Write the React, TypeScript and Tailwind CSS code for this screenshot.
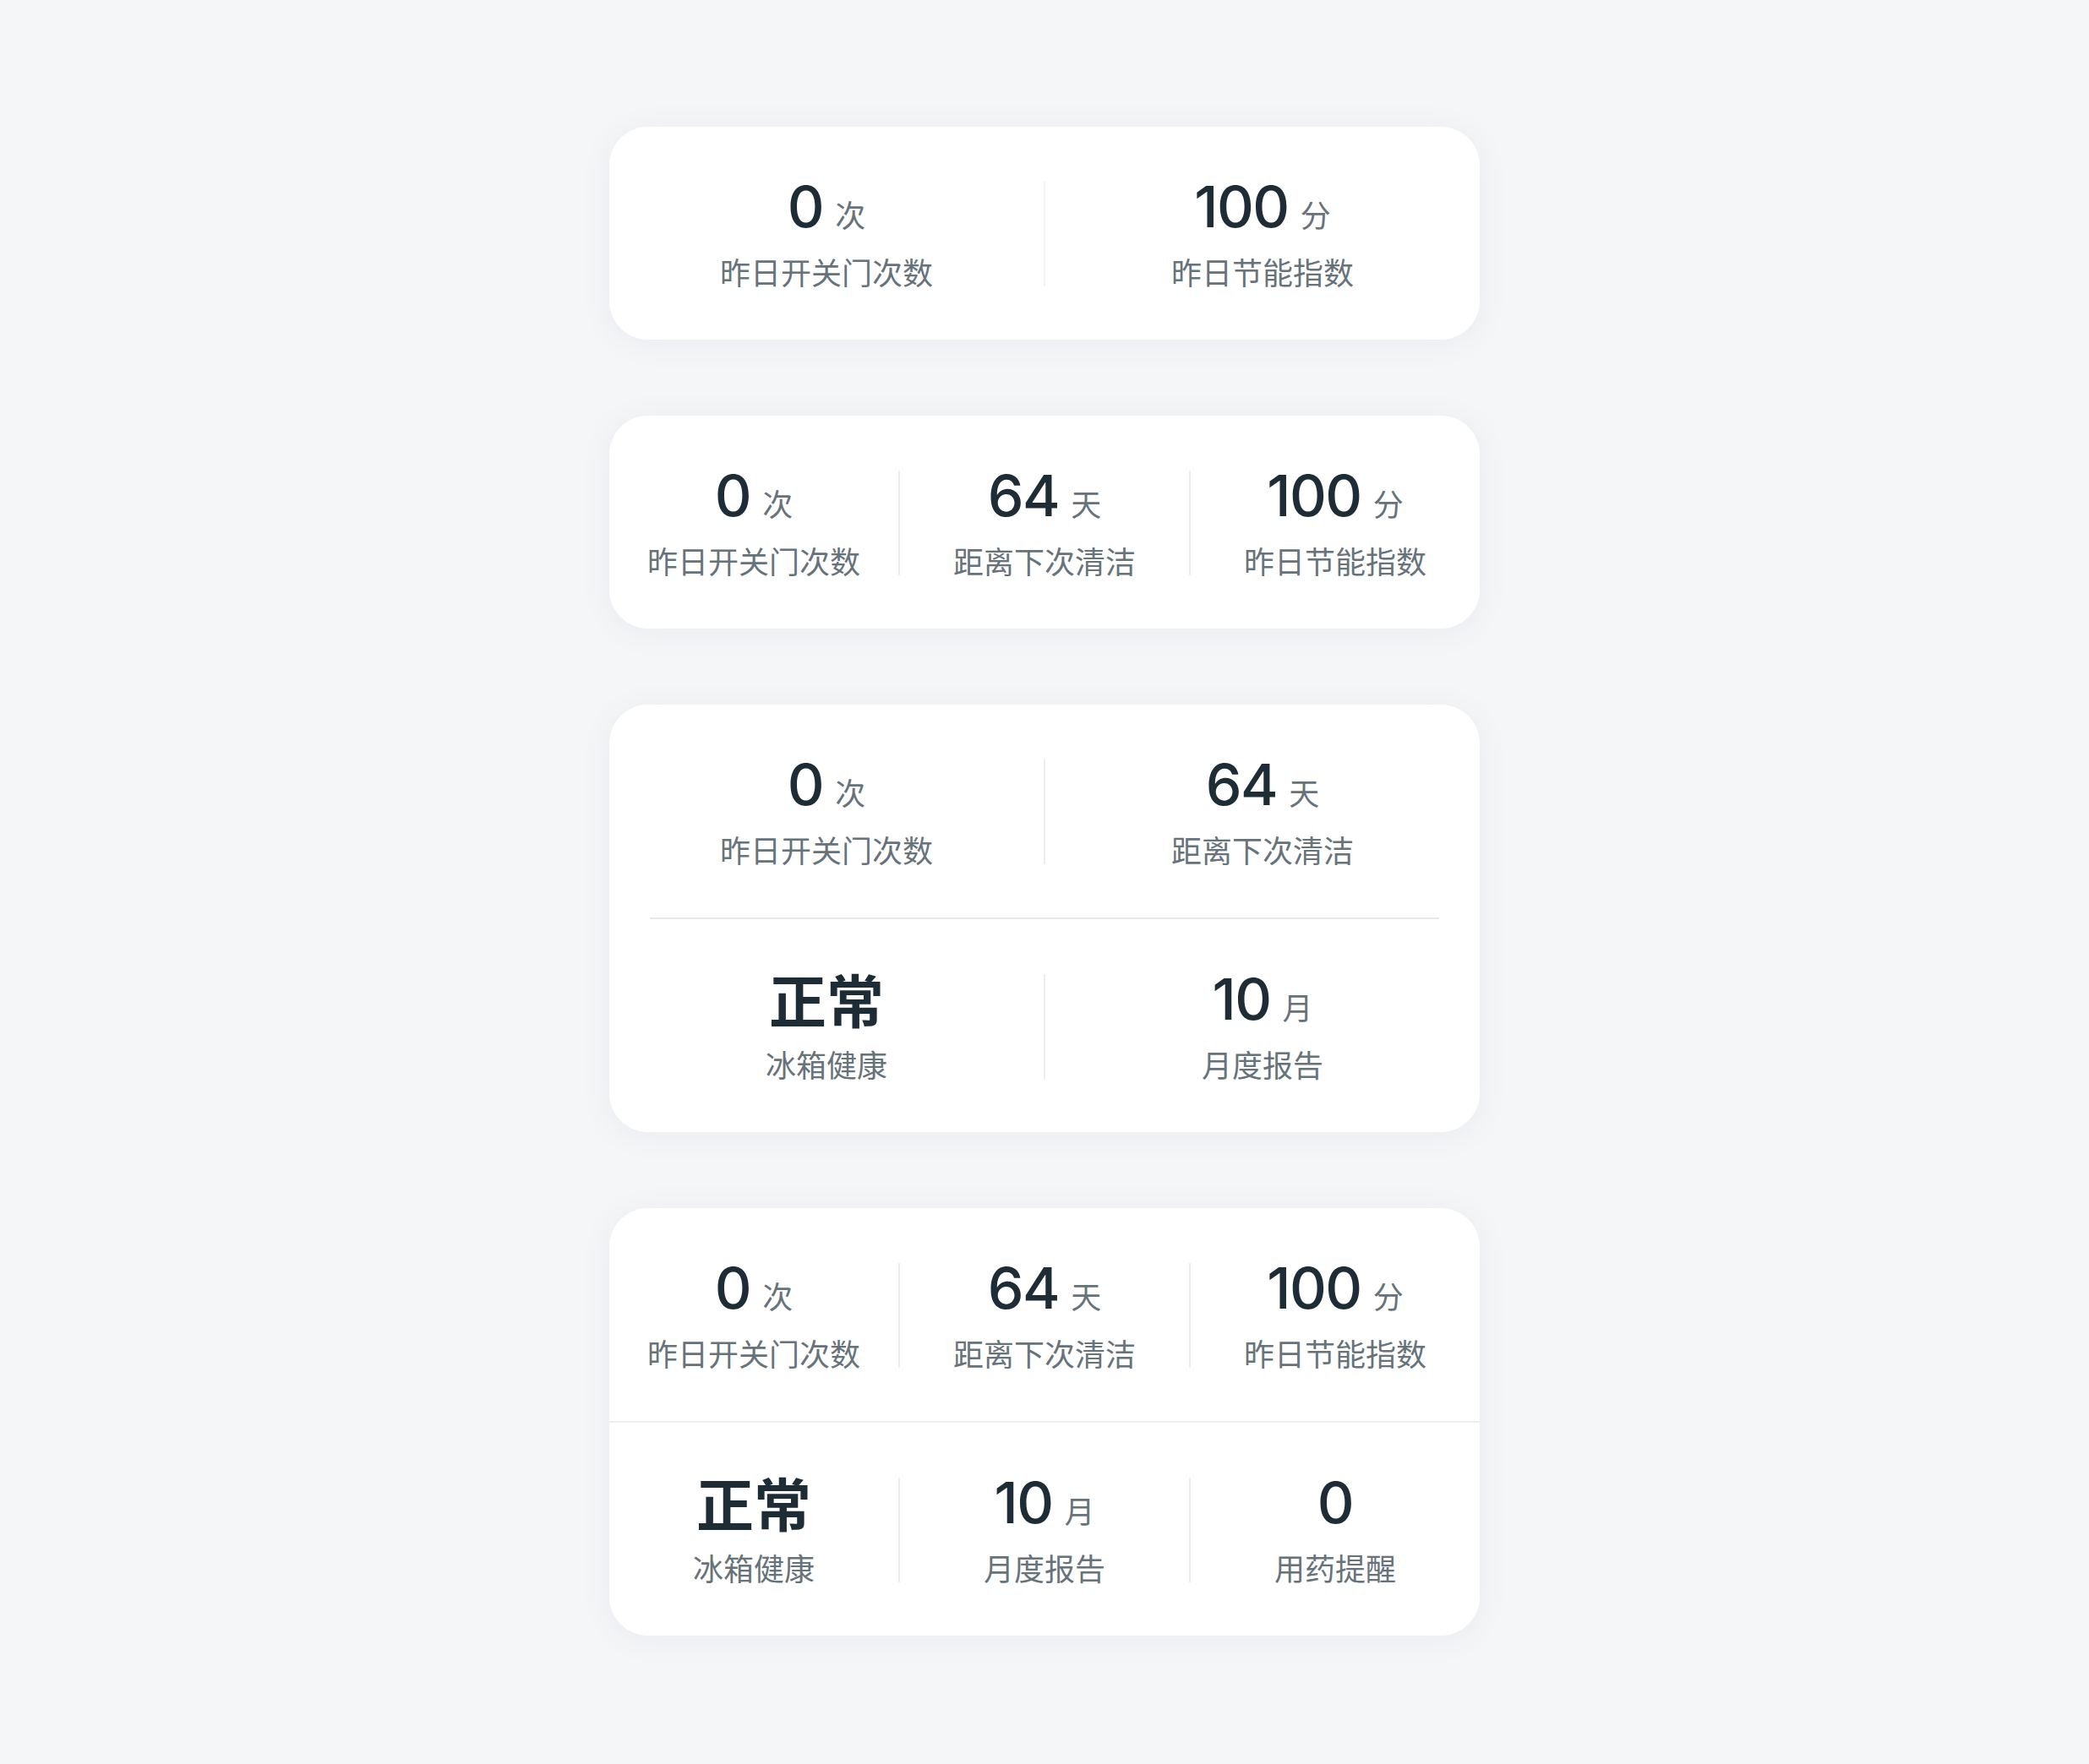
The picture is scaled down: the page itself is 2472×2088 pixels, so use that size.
import React from "react";

type Stat = { value: string; unit?: string; label: string; text?: boolean };

const FONT_NUM = { fontFamily: 'Inter, "Noto Sans CJK SC", sans-serif' };
const FONT_CJK = { fontFamily: '"Noto Sans CJK SC", "Noto Sans", sans-serif' };

function StatCell({ s }: { s: Stat }) {
  return (
    <div className="flex-1 flex flex-col items-center">
      <div className="flex items-baseline h-[58px]">
        {s.text ? (
          <span className="text-[68px] leading-[58px] font-bold text-[#1e2c35]" style={FONT_CJK}>
            {s.value}
          </span>
        ) : (
          <span className="text-[68px] leading-[58px] font-medium text-[#1e2c35] tracking-[-1.5px]" style={FONT_NUM}>
            {s.value}
          </span>
        )}
        {s.unit && (
          <span className="ml-[14px] text-[36px] leading-[58px] text-[#67737b]" style={FONT_CJK}>
            {s.unit}
          </span>
        )}
      </div>
      <div className="mt-[30px] text-[36px] leading-[36px] text-[#67737b]" style={FONT_CJK}>
        {s.label}
      </div>
    </div>
  );
}

function Row({ stats, faint }: { stats: Stat[]; faint?: boolean }) {
  const items: React.ReactNode[] = [];
  stats.forEach((s, i) => {
    if (i > 0)
      items.push(
        <div
          key={"d" + i}
          className={faint ? "w-[2px] self-stretch bg-[#f4f5f6]" : "w-[2px] self-stretch bg-[#eceef0]"}
        />
      );
    items.push(<StatCell key={i} s={s} />);
  });
  return <div className="flex items-stretch pt-[65px] pb-[63px]">{items}</div>;
}

function Card({ children }: { children: React.ReactNode }) {
  return (
    <div className="w-[1030px] bg-white rounded-[46px] shadow-[0_4px_40px_rgba(20,30,50,0.05)] overflow-hidden">
      {children}
    </div>
  );
}

const doorCount: Stat = { value: "0", unit: "次", label: "昨日开关门次数" };
const energy: Stat = { value: "100", unit: "分", label: "昨日节能指数" };
const clean: Stat = { value: "64", unit: "天", label: "距离下次清洁" };
const health: Stat = { value: "正常", label: "冰箱健康", text: true };
const report: Stat = { value: "10", unit: "月", label: "月度报告" };
const medicine: Stat = { value: "0", label: "用药提醒" };

export default function App() {
  return (
    <div className="w-[2472px] min-h-[2088px] bg-[#f5f6f8] flex flex-col items-center pt-[150px] pb-[150px] gap-[90px]">
      <Card>
        <Row stats={[doorCount, energy]} faint />
      </Card>
      <Card>
        <Row stats={[doorCount, clean, energy]} />
      </Card>
      <Card>
        <Row stats={[doorCount, clean]} />
        <div className="mx-[48px] h-[2px] bg-[#e6e8ea]" />
        <Row stats={[health, report]} />
      </Card>
      <Card>
        <Row stats={[doorCount, clean, energy]} />
        <div className="h-[2px] bg-[#eceef0]" />
        <Row stats={[health, report, medicine]} />
      </Card>
    </div>
  );
}
